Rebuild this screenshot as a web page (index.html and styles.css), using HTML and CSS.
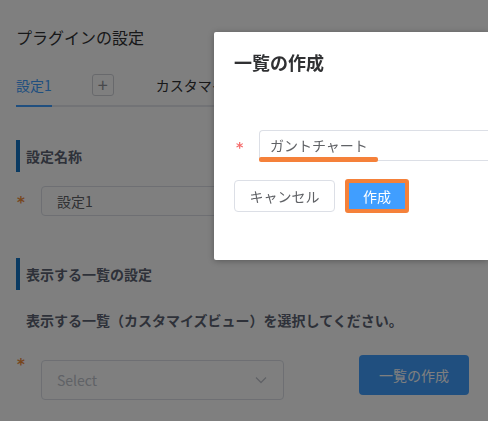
FILE: index.html
```html
<!DOCTYPE html>
<html lang="ja">
<head>
<meta charset="utf-8">
<title>プラグインの設定</title>
<link rel="stylesheet" href="styles.css">
</head>
<body>
<div class="page">
  <h1 class="title">プラグインの設定</h1>
  <div class="tabs">
    <span class="tab active">設定1</span>
    <span class="tab-add">+</span>
    <span class="tab">カスタマイズビュー</span>
  </div>

  <section class="section first">
    <h2 class="section-head">設定名称</h2>
    <div class="field-row">
      <span class="req">*</span>
      <div class="text-input">設定1</div>
    </div>
  </section>

  <section class="section second">
    <h2 class="section-head">表示する一覧の設定</h2>
    <p class="instruction">表示する一覧（カスタマイズビュー）を選択してください。</p>
    <div class="select-row">
      <span class="req">*</span>
      <div class="select">
        <span class="placeholder">Select</span>
        <svg class="chev" width="12" height="8" viewBox="0 0 12 8"><path d="M1 1.5 L6 6.5 L11 1.5" fill="none" stroke="#c0c4cc" stroke-width="1.3"/></svg>
      </div>
      <button class="btn-primary">一覧の作成</button>
    </div>
  </section>
</div>

<div class="overlay"></div>

<div class="dialog">
  <div class="dialog-title">一覧の作成</div>
  <div class="dialog-body">
    <div class="dialog-row">
      <span class="req-red">*</span>
      <div class="dialog-input">
        ガントチャート
        <span class="mark"></span>
      </div>
    </div>
  </div>
  <div class="dialog-footer">
    <button class="btn-default">キャンセル</button>
    <button class="btn-create">作成</button>
  </div>
</div>
</body>
</html>
```

FILE: styles.css
```css
* { box-sizing: border-box; }
html, body {
  margin: 0;
  padding: 0;
  width: 488px;
  height: 421px;
  overflow: hidden;
  background: #ffffff;
  font-family: "Noto Sans CJK JP", "Noto Sans", sans-serif;
  color: #303133;
}
.page {
  padding: 25px 16px 0 16px;
}
.title {
  margin: 0;
  font-size: 16px;
  line-height: 24px;
  font-weight: normal;
  color: #303133;
}
.tabs {
  margin-top: 16px;
  height: 42px;
  display: flex;
  align-items: center;
  border-bottom: 2px solid #e4e7ed;
}
.tab {
  font-size: 14px;
  line-height: 40px;
  height: 40px;
  color: #303133;
  white-space: nowrap;
}
.tab.active {
  color: #409eff;
  border-bottom: 2px solid #409eff;
  height: 42px;
  margin-bottom: -2px;
  align-self: flex-start;
}
.tab-add {
  margin: 0 40px 0 40px;
  width: 22px;
  height: 22px;
  border: 1px solid #d0d3d9;
  border-radius: 3px;
  font-size: 18px;
  line-height: 19px;
  text-align: center;
  color: #909399;
}
.tab-add + .tab { margin-left: 2px; }
.section.first { margin-top: 33px; }
.section.second { margin-top: 42px; }
.section-head {
  margin: 0;
  height: 32px;
  line-height: 32px;
  border-left: 4px solid #1474c4;
  padding-left: 6px;
  font-size: 14px;
  font-weight: bold;
  color: #5c6372;
}
.field-row {
  margin-top: 14px;
  display: flex;
  align-items: center;
}
.req {
  width: 25px;
  color: #ef8c3a;
  font-family: "DejaVu Sans", sans-serif;
  font-weight: bold;
  font-size: 15px;
  line-height: 15px;
  padding-top: 5px;
  padding-left: 1px;
}
.text-input {
  width: 320px;
  height: 30px;
  border: 1px solid #dcdfe6;
  border-radius: 4px;
  padding-left: 15px;
  font-size: 14px;
  line-height: 28px;
  color: #606266;
}
.instruction {
  margin: 20px 0 0 10px;
  font-size: 14px;
  line-height: 20px;
  font-weight: bold;
  color: #5c6372;
}
.select-row {
  margin-top: 25px;
  display: flex;
  align-items: flex-start;
}
.select-row .req { padding-top: 3px; }
.select {
  margin-top: 5px;
  width: 243px;
  height: 40px;
  border: 1px solid #dcdfe6;
  border-radius: 4px;
  display: flex;
  align-items: center;
  justify-content: space-between;
  padding: 0 16px 0 15px;
}
.placeholder {
  font-size: 14px;
  color: #c0c4cc;
}
.btn-primary {
  margin-left: 75px;
  width: 110px;
  height: 40px;
  border: none;
  border-radius: 4px;
  background: #409eff;
  color: #ffffff;
  font-family: inherit;
  font-size: 14px;
  padding: 0;
}
.overlay {
  position: fixed;
  inset: 0;
  background: rgba(0, 0, 0, 0.5);
}
.dialog {
  position: absolute;
  left: 214px;
  top: 32px;
  right: 0;
  height: 228px;
  background: #ffffff;
  border-radius: 2px 0 0 2px;
  box-shadow: 0 1px 6px rgba(0, 0, 0, 0.3);
  padding: 18px 0 0 20px;
}
.dialog-title {
  font-size: 18px;
  line-height: 24px;
  font-weight: bold;
  color: #303133;
}
.dialog-body {
  margin-top: 56px;
}
.dialog-row {
  display: flex;
  align-items: center;
}
.req-red {
  width: 25px;
  color: #f56c6c;
  font-family: "DejaVu Sans", sans-serif;
  font-weight: bold;
  font-size: 14px;
  line-height: 14px;
  padding-top: 2px;
  padding-left: 2px;
}
.dialog-input {
  position: relative;
  flex: 1;
  height: 31px;
  border: 1px solid #dcdfe6;
  border-right: none;
  border-radius: 4px 0 0 4px;
  padding-left: 10px;
  font-size: 14px;
  line-height: 29px;
  color: #606266;
}
.mark {
  position: absolute;
  left: -1px;
  top: 26px;
  width: 119px;
  height: 5px;
  border-radius: 2px;
  background: #f5813a;
}
.dialog-footer {
  margin-top: 18px;
  display: flex;
  align-items: center;
  gap: 10px;
}
.btn-default {
  width: 101px;
  height: 32px;
  border: 1px solid #dcdfe6;
  border-radius: 4px;
  background: #ffffff;
  color: #606266;
  font-family: inherit;
  font-size: 14px;
  padding: 0;
}
.btn-create {
  width: 64px;
  height: 34px;
  border: 4px solid #f5813a;
  border-radius: 3px;
  background: #409eff;
  color: #ffffff;
  font-family: inherit;
  font-size: 14px;
  padding: 0;
}
```
